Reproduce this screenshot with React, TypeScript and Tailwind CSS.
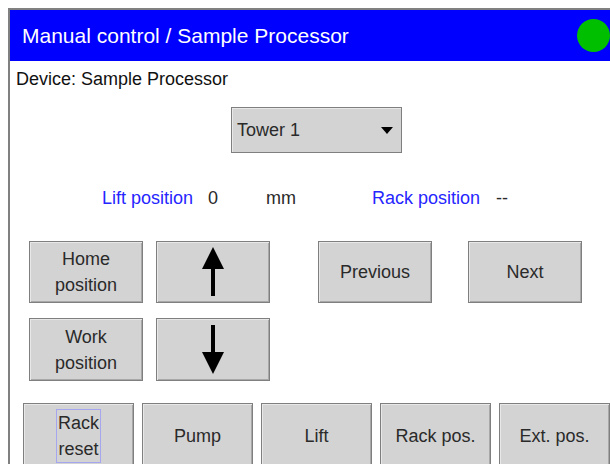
import React from 'react';

const font = { fontFamily: '"Liberation Sans", Arial, sans-serif' };

const btn =
  'flex items-center justify-center text-center bg-[#d3d3d3] border border-[#7f7f7f] shadow-[inset_1px_1px_0_#e8e8e8,inset_-1px_-1px_0_#a8a8a8] text-[18px] leading-[26px] text-[#2a2a2a]';

const UpArrow: React.FC = () => (
  <svg width="22" height="50" viewBox="0 0 22 50">
    <polygon points="11,0 0,22 22,22" fill="#000" />
    <rect x="9" y="21" width="4" height="28" fill="#000" />
  </svg>
);

const DownArrow: React.FC = () => (
  <svg width="22" height="50" viewBox="0 0 22 50">
    <rect x="9" y="0" width="4" height="28" fill="#000" />
    <polygon points="0,27 22,27 11,49" fill="#000" />
  </svg>
);

const App: React.FC = () => {
  const bottomButtons = ['Pump', 'Lift', 'Rack pos.', 'Ext. pos.'];

  return (
    <div className="w-[610px] h-[464px] overflow-hidden bg-white pt-[8px] pl-[8px]" style={font}>
      <div className="h-full border-t-2 border-l-2 border-[#808080] flex flex-col">
        {/* title bar */}
        <div className="h-[51px] shrink-0 bg-[#0000ff] flex items-center pl-[12px]">
          <span className="text-white text-[21px]">Manual control / Sample Processor</span>
          <span className="ml-auto w-[33px] h-[33px] rounded-full bg-[#00bf00]" />
        </div>

        <div className="h-[37px] shrink-0 flex items-center pl-[6px] text-[18px] text-[#111]">
          Device: Sample Processor
        </div>

        {/* tower select */}
        <div className="mt-[9px] pl-[221px] shrink-0">
          <div className="w-[171px] h-[46px] bg-[#d3d3d3] border border-[#7f7f7f] shadow-[inset_1px_1px_0_#e8e8e8] flex items-center pl-[5px] pr-[8px] text-[18px] text-[#2a2a2a]">
            <span>Tower 1</span>
            <svg className="ml-auto" width="12" height="7" viewBox="0 0 12 7">
              <polygon points="0,0 12,0 6,7" fill="#000" />
            </svg>
          </div>
        </div>

        {/* positions */}
        <div className="mt-[27px] h-[36px] shrink-0 flex items-center pl-[92px] text-[18px]">
          <span className="w-[106px] text-[#2626ff]">Lift position</span>
          <span className="w-[58px] text-[#2a2a2a]">0</span>
          <span className="w-[106px] text-[#2a2a2a]">mm</span>
          <span className="w-[124px] text-[#2626ff]">Rack position</span>
          <span className="text-[#2a2a2a]">--</span>
        </div>

        {/* control buttons */}
        <div className="mt-[25px] flex pl-[19px] shrink-0">
          <div className={`${btn} w-[114px] h-[62px]`}>
            Home
            <br />
            position
          </div>
          <div className={`${btn} w-[114px] h-[62px] ml-[13px]`}>
            <UpArrow />
          </div>
          <div className={`${btn} w-[114px] h-[62px] ml-[48px]`}>Previous</div>
          <div className={`${btn} w-[114px] h-[62px] ml-[36px]`}>Next</div>
        </div>
        <div className="mt-[15px] flex pl-[19px] shrink-0">
          <div className={`${btn} w-[114px] h-[63px]`}>
            Work
            <br />
            position
          </div>
          <div className={`${btn} w-[114px] h-[63px] ml-[13px]`}>
            <DownArrow />
          </div>
        </div>

        {/* bottom tabs */}
        <div className="mt-[22px] flex gap-[8px] pl-[13px] shrink-0">
          <div className={`${btn} w-[111px] h-[66px] shrink-0`}>
            <span className="outline outline-1 outline-[#a6a6ee] px-[1px]">
              Rack
              <br />
              reset
            </span>
          </div>
          {bottomButtons.map((label) => (
            <div key={label} className={`${btn} w-[111px] h-[66px] shrink-0`}>
              {label}
            </div>
          ))}
        </div>
      </div>
    </div>
  );
};

export default App;
